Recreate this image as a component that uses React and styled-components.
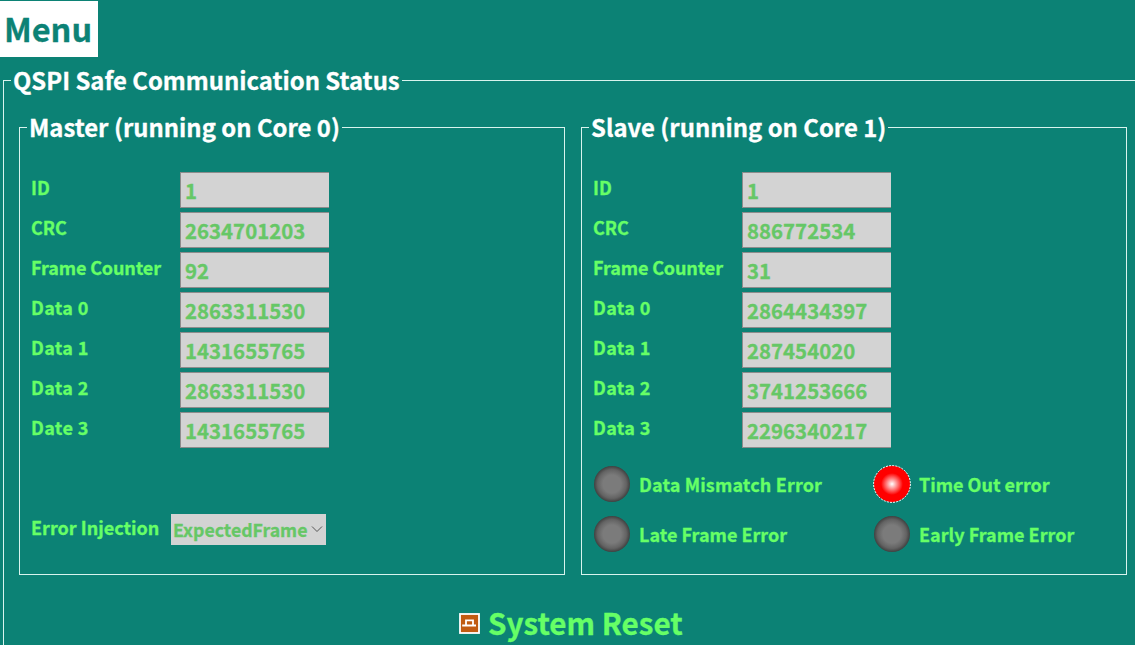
import React from "react";
import styled, { createGlobalStyle } from "styled-components";

const GlobalStyle = createGlobalStyle`
  * { box-sizing: border-box; }
  body {
    margin: 0;
    overflow: hidden;
    background: #0c8275;
    font-family: "Noto Sans CJK SC", "Noto Sans", sans-serif;
    font-weight: 700;
    color: #66ff66;
    -webkit-text-stroke: 0.3px currentColor;
  }
`;

const Page = styled.main`
  width: 1135px;
  height: 645px;
  overflow: hidden;
  padding-top: 1px;
`;

const MenuButton = styled.button`
  display: block;
  width: 98px;
  height: 56px;
  padding: 0 0 3px 4px;
  border: 0;
  background: #fff;
  color: #0c8275;
  font: inherit;
  font-size: 32.5px;
  line-height: 53px;
  text-align: left;
  white-space: nowrap;
`;

const Group = styled.fieldset`
  min-width: 0;
  margin: 0;
  border: 1px solid #d9f4ee;
`;

const Title = styled.legend`
  height: 31px;
  padding: 0 2px;
  color: #fff;
  font-size: 23.85px;
  line-height: 29px;
  white-space: nowrap;
`;

const StatusGroup = styled(Group)`
  width: 1142px;
  height: 640px;
  margin: 8px 0 0 3px;
  padding: 16px 15px 0;

  > ${Title} { margin-left: -8px; }
`;

const Panels = styled.div`
  display: flex;
  gap: 16px;
`;

const Panel = styled(Group)`
  width: 546px;
  height: 463px;
  padding: 29px 11px 0;

  > ${Title} { margin-left: -4px; }
`;

const Rows = styled.div`
  display: grid;
  grid-auto-rows: 36px;
  gap: 4px;
`;

const Row = styled.div`
  display: flex;
`;

const Label = styled.span`
  width: ${(p) => p.$width || 149}px;
  font-size: 18px;
  line-height: ${(p) => p.$leading || 30}px;
  letter-spacing: ${(p) => p.$tracking || 0}px;
  white-space: nowrap;
`;

const Value = styled.output`
  width: 149px;
  height: 36px;
  padding-left: 4px;
  border: solid #8c8c8c;
  border-width: 1px 0 1px 1px;
  background: #d3d3d3;
  color: #66c766;
  font-size: 20.4px;
  line-height: 35px;
`;

const Injection = styled.div`
  display: flex;
  margin-top: 66px;
`;

const Select = styled.div`
  display: flex;
  align-items: center;
  width: 155px;
  height: 31px;
  padding-left: 2px;
  background: #d3d3d3;
  color: #66c766;
  font-size: 17.7px;
  line-height: 31px;

  svg { margin: -2px 0 0 4px; }
`;

const Indicators = styled.div`
  display: grid;
  grid-template-columns: 280px 240px;
  grid-auto-rows: 50px;
  margin-top: 11px;
`;

const Indicator = styled.div`
  display: flex;
  align-items: center;
  gap: 8px;
  font-size: 18px;
  line-height: 32px;
  white-space: nowrap;
`;

const Lamp = styled.svg`
  width: 38px;
  height: 38px;
`;

const Reset = styled.button`
  display: flex;
  align-items: center;
  gap: 8px;
  height: 50px;
  margin: 23px 0 0 440px;
  padding: 0;
  border: 0;
  background: none;
  color: #66ff66;
  font: inherit;
  font-size: 29.6px;
  line-height: 50px;
  white-space: nowrap;
`;

const masterFields = [
  ["ID", "1"],
  ["CRC", "2634701203"],
  ["Frame Counter", "92"],
  ["Data 0", "2863311530"],
  ["Data 1", "1431655765"],
  ["Data 2", "2863311530"],
  ["Date 3", "1431655765"],
];

const slaveFields = [
  ["ID", "1"],
  ["CRC", "886772534"],
  ["Frame Counter", "31"],
  ["Data 0", "2864434397"],
  ["Data 1", "287454020"],
  ["Data 2", "3741253666"],
  ["Data 3", "2296340217"],
];

const errors = [
  ["Data Mismatch Error", false],
  ["Time Out error", true],
  ["Late Frame Error", false],
  ["Early Frame Error", false],
];

const trackingOf = (name) => {
  if (name.startsWith("Dat")) return name.length > 6 ? 0.14 : 0.34;
  return name === "Frame Counter" ? -0.13 : 0;
};

function Fields({ items }) {
  return (
    <Rows>
      {items.map(([name, value]) => (
        <Row key={name}>
          <Label $tracking={trackingOf(name)}>{name}</Label>
          <Value>{value}</Value>
        </Row>
      ))}
    </Rows>
  );
}

function StatusLamp({ on }) {
  return (
    <Lamp viewBox="0 0 38 38">
      <defs>
        <radialGradient id="lampOn">
          <stop offset="0" stopColor="#fff" />
          <stop offset="0.6" stopColor="#f00" />
        </radialGradient>
        <radialGradient id="lampOff">
          <stop offset="0.5" stopColor="#7b7b7b" />
          <stop offset="0.8" stopColor="#636363" />
          <stop offset="1" stopColor="#404040" />
        </radialGradient>
      </defs>
      {on ? (
        <>
          <circle cx="19" cy="19" r="18.2" fill="url(#lampOn)" />
          <circle cx="19" cy="19" r="18.4" fill="none" stroke="#fff" strokeDasharray="2 1.2" />
        </>
      ) : (
        <circle cx="19" cy="19" r="18" fill="url(#lampOff)" />
      )}
    </Lamp>
  );
}

export default function App() {
  return (
    <Page>
      <GlobalStyle />
      <MenuButton>Menu</MenuButton>
      <StatusGroup>
        <Title>QSPI Safe Communication Status</Title>
        <Panels>
          <Panel>
            <Title>Master (running on Core 0)</Title>
            <Fields items={masterFields} />
            <Injection>
              <Label $width={140} $leading={26}>Error Injection</Label>
              <Select>
                ExpectedFrame
                <svg width="12" height="8" viewBox="0 0 12 8" fill="none" stroke="#555">
                  <path d="M1 1.5 6 6.5 11 1.5" />
                </svg>
              </Select>
            </Injection>
          </Panel>
          <Panel>
            <Title>Slave (running on Core 1)</Title>
            <Fields items={slaveFields} />
            <Indicators>
              {errors.map(([name, on]) => (
                <Indicator key={name}>
                  <StatusLamp on={on} />
                  <Label $width={190} $tracking={trackingOf(name)}>{name}</Label>
                </Indicator>
              ))}
            </Indicators>
          </Panel>
        </Panels>
        <Reset>
          <svg width="21" height="21" viewBox="0 0 21 21" fill="none" stroke="#fff">
            <rect x="1" y="1" width="19" height="19" fill="#c15b11" strokeWidth="1.8" />
            <path d="M3.2 12.5H17M7 12.5V7.3h7v5.2" strokeWidth="1.8" />
          </svg>
          System Reset
        </Reset>
      </StatusGroup>
    </Page>
  );
}
